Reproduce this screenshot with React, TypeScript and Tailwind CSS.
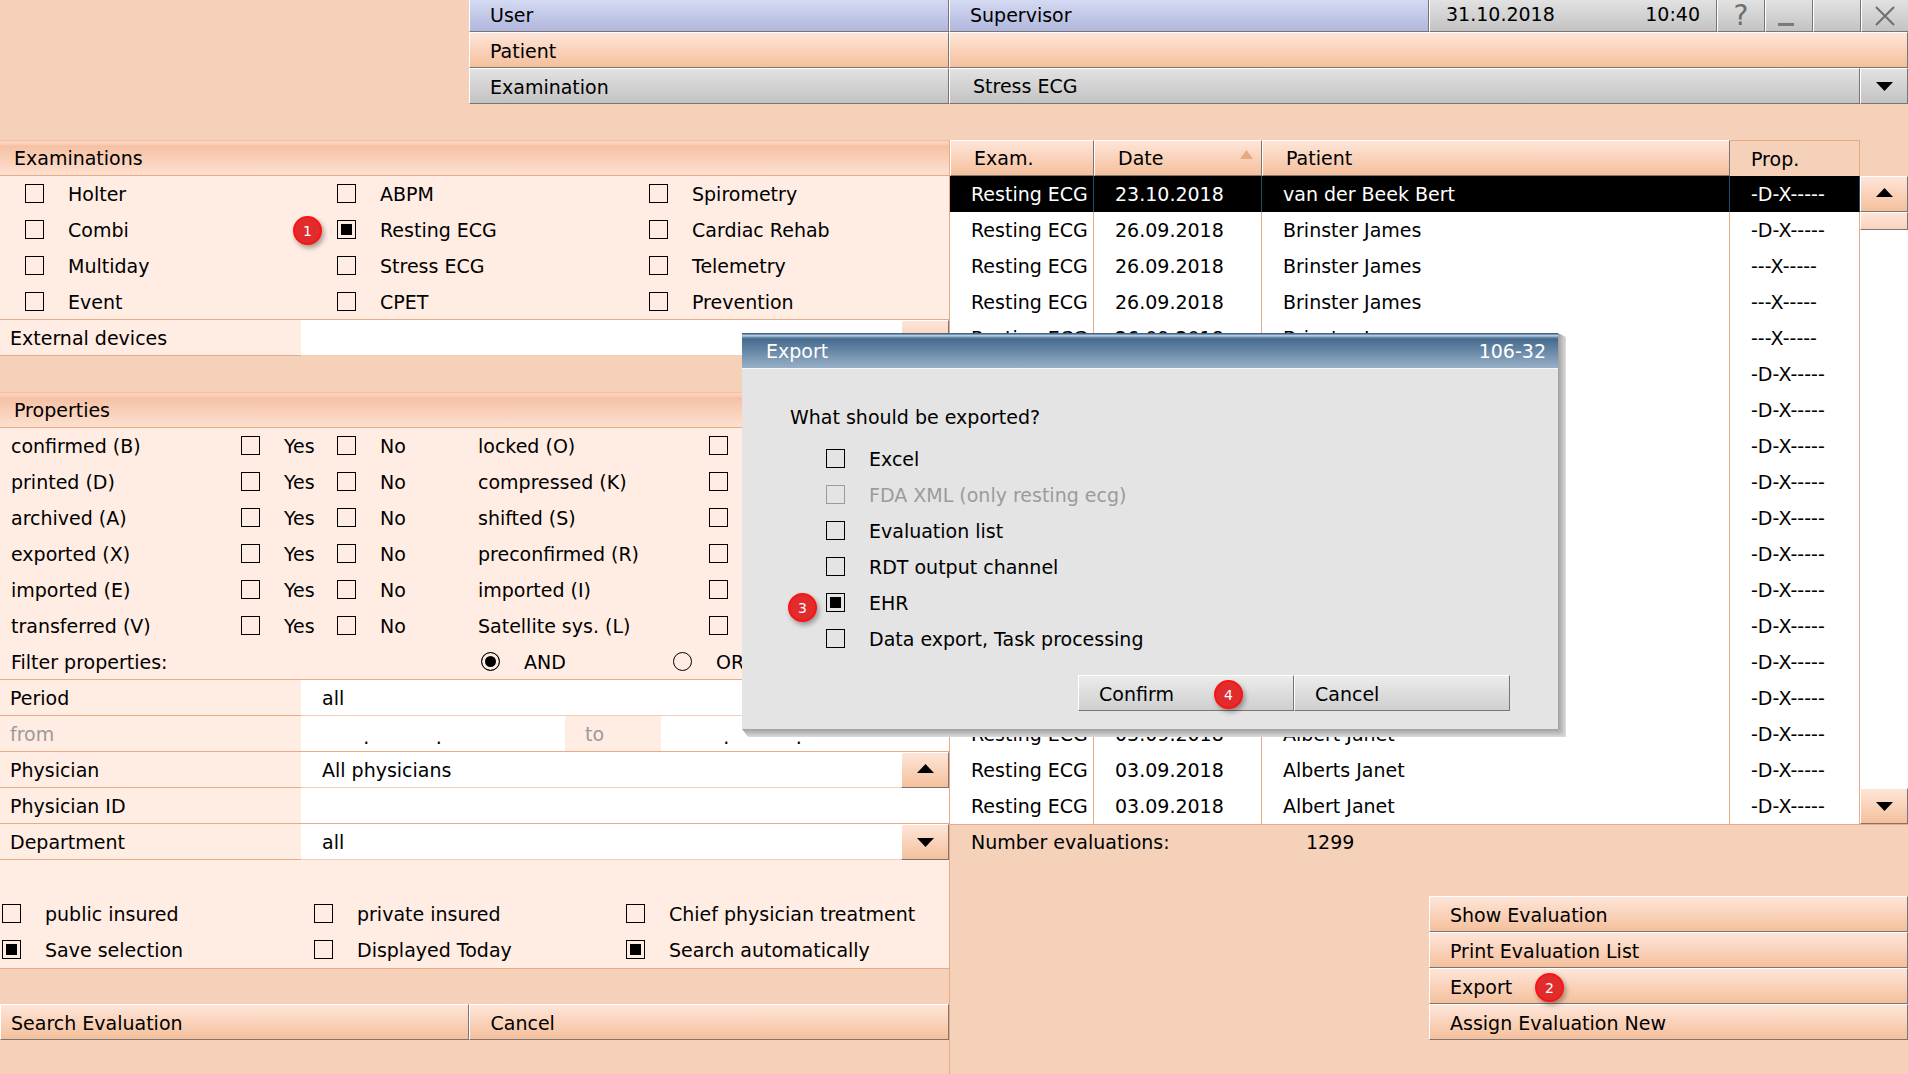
import { useState } from "react"
import type { ReactNode } from "react"
import clsx from "clsx"

const examinations = [
  "Holter", "ABPM", "Spirometry",
  "Combi", "Resting ECG", "Cardiac Rehab",
  "Multiday", "Stress ECG", "Telemetry",
  "Event", "CPET", "Prevention",
]

const properties = [
  ["confirmed (B)", "locked (O)"],
  ["printed (D)", "compressed (K)"],
  ["archived (A)", "shifted (S)"],
  ["exported (X)", "preconfirmed (R)"],
  ["imported (E)", "imported (I)"],
  ["transferred (V)", "Satellite sys. (L)"],
]

const options = [
  { name: "public insured" },
  { name: "private insured" },
  { name: "Chief physician treatment" },
  { name: "Save selection", checked: true },
  { name: "Displayed Today" },
  { name: "Search automatically", checked: true },
]

const exportTargets = [
  { name: "Excel" },
  { name: "FDA XML (only resting ecg)", disabled: true },
  { name: "Evaluation list" },
  { name: "RDT output channel" },
  { name: "EHR", checked: true },
  { name: "Data export, Task processing" },
]

const evaluations = [
  { date: "23.10.2018", patient: "van der Beek Bert", prop: "-D-X-----" },
  { date: "26.09.2018", patient: "Brinster James", prop: "-D-X-----" },
  { date: "26.09.2018", patient: "Brinster James", prop: "---X-----" },
  { date: "26.09.2018", patient: "Brinster James", prop: "---X-----" },
  { date: "26.09.2018", patient: "Brinster James", prop: "---X-----" },
  { date: "26.09.2018", patient: "Brinster James", prop: "-D-X-----" },
  { date: "26.09.2018", patient: "Brinster James", prop: "-D-X-----" },
  { date: "26.09.2018", patient: "Brinster James", prop: "-D-X-----" },
  { date: "26.09.2018", patient: "Brinster James", prop: "-D-X-----" },
  { date: "03.09.2018", patient: "Albert Janet", prop: "-D-X-----" },
  { date: "03.09.2018", patient: "Albert Janet", prop: "-D-X-----" },
  { date: "03.09.2018", patient: "Albert Janet", prop: "-D-X-----" },
  { date: "03.09.2018", patient: "Albert Janet", prop: "-D-X-----" },
  { date: "03.09.2018", patient: "Albert Janet", prop: "-D-X-----" },
  { date: "03.09.2018", patient: "Albert Janet", prop: "-D-X-----" },
  { date: "03.09.2018", patient: "Albert Janet", prop: "-D-X-----" },
  { date: "03.09.2018", patient: "Alberts Janet", prop: "-D-X-----" },
  { date: "03.09.2018", patient: "Albert Janet", prop: "-D-X-----" },
]

const raised = "border border-t-white border-l-white border-r-[#7b7472] border-b-[#7b7472]"
const peach = "bg-linear-to-b from-[#fee5d8] to-[#f4c09c]"
const silver = "bg-linear-to-b from-[#e2e2e2] to-[#c3c3c3]"
const lavender = "bg-linear-to-b from-[#d5daf3] to-[#b0b7dc]"
const paper = "bg-linear-to-b from-[#ececec] to-[#cfcfcf]"

function Arrow({ up }: { up?: boolean }) {
  return (
    <svg width="17" height="9" viewBox="0 0 17 9" className={clsx("fill-black", up && "mb-1")}>
      <path d={up ? "M8.5 0L17 9H0z" : "M0 0H17L8.5 9z"} />
    </svg>
  )
}

function Badge({ children, className }: { children: ReactNode; className: string }) {
  return (
    <span
      className={clsx(
        "absolute flex size-[29px] items-center justify-center rounded-full border-2 border-[#fb1414] bg-[#e02c2c] text-sm leading-none text-white shadow-[2px_3px_5px_rgba(0,0,0,0.35)]",
        className,
      )}
    >
      {children}
    </span>
  )
}

interface CheckProps {
  label: string
  checked?: boolean
  disabled?: boolean
  grey?: boolean
}

function Check({ label, checked, disabled, grey }: CheckProps) {
  return (
    <label className={clsx("flex h-9 items-center gap-6 whitespace-nowrap", disabled && "text-[#9b9b9b]")}>
      <input
        type="checkbox"
        defaultChecked={checked}
        disabled={disabled}
        className={clsx(
          "mb-0.5 size-[19px] shrink-0 appearance-none border border-black checked:bg-black disabled:border-[#9b9b9b]",
          grey ? "checked:shadow-[inset_0_0_0_3px_#e4e4e4]" : "checked:shadow-[inset_0_0_0_3px_#ffece2]",
        )}
      />
      {label}
    </label>
  )
}

function Radio({ label, checked }: { label: string; checked?: boolean }) {
  return (
    <label className="flex h-9 items-center gap-6">
      <input
        type="radio"
        name="filter"
        defaultChecked={checked}
        className="mb-0.5 size-[19px] shrink-0 appearance-none rounded-full border border-black checked:bg-black checked:shadow-[inset_0_0_0_3px_#ffece2]"
      />
      {label}
    </label>
  )
}

function SectionTitle({ children }: { children: ReactNode }) {
  return (
    <h2 className="h-9 border-t border-b border-t-[#f5bfa2] border-b-[#e8ab85] bg-[linear-gradient(to_bottom,#fbd3bd_0,#fbd3bd_2px,#f5c1a4_5px,#fde0d0_100%)] pl-3.5 leading-[34px]">
      {children}
    </h2>
  )
}

function SelectRow({ id, label, value, up }: { id: string; label: string; value: string; up?: boolean }) {
  return (
    <div className="flex h-9">
      <label htmlFor={id} className="w-[301px] border-b border-[#e8ab85] pl-2.5 leading-9">
        {label}
      </label>
      <select id={id} className="min-w-0 flex-1 appearance-none border-b border-[#f5cfb8] bg-white pt-0.5 pl-[21px]">
        <option>{value}</option>
      </select>
      <button aria-label={`Open ${label}`} className={clsx("flex w-12 items-center justify-center", raised, peach)}>
        <Arrow up={up} />
      </button>
    </div>
  )
}

function TopBar() {
  return (
    <header className="grid grid-cols-[469fr_480fr_959fr]">
      <div className={clsx("col-start-2 h-8 pl-5 leading-[31px]", raised, lavender, "border-t-0")}>User</div>
      <div className="flex h-8 leading-[31px]">
        <div className={clsx("flex-1 pl-5", raised, lavender, "border-t-0")}>Supervisor</div>
        <div className={clsx("flex w-72 justify-between px-4 leading-[29px]", raised, silver, "border-t-0")}>
          <span>31.10.2018</span>
          <span>10:40</span>
        </div>
        <button className={clsx("w-12 text-[28px] leading-7 text-[#6e6e6e]", raised, silver, "border-t-0")}>?</button>
        <button aria-label="Minimize" className={clsx("flex w-12 justify-center", raised, silver, "border-t-0")}>
          <svg width="24" height="30" className="stroke-[#7a7a7a]" strokeWidth="3">
            <path d="M1 24.5H17" />
          </svg>
        </button>
        <button aria-label="Maximize" className={clsx("w-12", raised, silver, "border-t-0")} />
        <button aria-label="Close" className={clsx("flex w-[47px] items-center justify-center", silver, "border-b border-l border-b-[#7b7472] border-l-white")}>
          <svg width="20" height="20" className="stroke-[#6e6e6e]" strokeWidth="2">
            <path d="M1 1L19 19M19 1L1 19" />
          </svg>
        </button>
      </div>

      <div className={clsx("col-start-2 h-9 pl-5 leading-9", raised, peach)}>Patient</div>
      <div className={clsx("h-9", raised, peach)} />

      <label htmlFor="examination" className={clsx("col-start-2 h-9 pl-5 leading-9", raised, silver)}>
        Examination
      </label>
      <div className="flex h-9">
        <select id="examination" className={clsx("min-w-0 flex-1 appearance-none pl-[23px]", raised, silver)}>
          <option>Stress ECG</option>
        </select>
        <button aria-label="Choose examination" className={clsx("flex w-12 items-center justify-center", raised, silver)}>
          <Arrow />
        </button>
      </div>
    </header>
  )
}

function SearchPanel() {
  return (
    <section className="border-r border-[#e8ab85]">
      <SectionTitle>Examinations</SectionTitle>
      <div className="relative grid grid-cols-[312px_312px_1fr] bg-[#ffece2] pl-[25px]">
        {examinations.map((name) => (
          <Check key={name} label={name} checked={name === "Resting ECG"} />
        ))}
        <Badge className="top-10 left-[293px]">1</Badge>
      </div>
      <div className="relative -mt-px border-t border-[#e8ab85] bg-[#ffece2]">
        <SelectRow id="devices" label="External devices" value="" />
      </div>

      <div className="mt-9 bg-[#ffece2]">
        <SectionTitle>Properties</SectionTitle>
        {properties.map(([first, second]) => (
          <div key={first} className="grid h-9 grid-cols-[230px_96px_141px_231px_96px_1fr] pl-[11px] leading-9 whitespace-nowrap">
            <span>{first}</span>
            <Check label="Yes" />
            <Check label="No" />
            <span>{second}</span>
            <Check label="Yes" />
            <Check label="No" />
          </div>
        ))}
        <div className="grid h-9 grid-cols-[470px_192px_1fr] border-b border-[#e8ab85] pl-[11px] leading-9">
          <span>Filter properties:</span>
          <Radio label="AND" checked />
          <Radio label="OR" />
        </div>

        <SelectRow id="period" label="Period" value="all" />
        <div className="flex h-9 border-b border-[#e8ab85] leading-9 text-[#9b9b9b]">
          <label htmlFor="from" className="w-[301px] pl-2.5">
            from
          </label>
          <input id="from" defaultValue="       .           ." className="w-[264px] bg-white pt-1.5 pl-5 text-black" />
          <label htmlFor="to" className="w-24 pl-5">
            to
          </label>
          <input id="to" defaultValue="       .           ." className="min-w-0 flex-1 bg-white pt-1.5 pl-5 text-black" />
        </div>
        <SelectRow id="physician" label="Physician" value="All physicians" up />
        <div className="flex h-9 border-b border-[#e8ab85] leading-9">
          <label htmlFor="physician-id" className="w-[301px] pl-2.5">
            Physician ID
          </label>
          <input id="physician-id" className="min-w-0 flex-1 bg-white pl-5" />
        </div>
        <SelectRow id="department" label="Department" value="all" />

        <div className="grid grid-cols-[312px_312px_1fr] border-b border-[#e8ab85] pt-9 pl-0.5">
          {options.map((option) => (
            <Check key={option.name} label={option.name} checked={option.checked} />
          ))}
        </div>
      </div>

      <div className="mt-[35px] grid grid-cols-[469fr_479fr]">
        <button className={clsx("h-9 pt-0.5 pl-2.5 text-left", raised, peach)}>Search Evaluation</button>
        <button className={clsx("h-9 pt-0.5 pl-5 text-left", raised, peach)}>Cancel</button>
      </div>
    </section>
  )
}

function EvaluationList() {
  const [selected, setSelected] = useState(0)
  const cell = "border-r p-0 pl-[21px] whitespace-nowrap"
  const head = "h-9 p-0 pl-[23px] text-left font-normal"

  return (
    <section>
      <div className="flex border-b border-[#e8ab85]">
        <table className="flex-1 table-fixed border-separate border-spacing-0">
          <colgroup>
            <col className="w-36" />
            <col className="w-[168px]" />
            <col />
            <col className="w-[130px]" />
          </colgroup>
          <thead>
            <tr>
              <th className={clsx(head, raised, peach)}>Exam.</th>
              <th className={clsx(head, raised, peach)}>
                <span className="flex items-center justify-between pr-2">
                  Date
                  <svg width="13" height="9" className="mb-2 fill-[#e3aa84]">
                    <path d="M6.5 0L13 9H0z" />
                  </svg>
                </span>
              </th>
              <th className={clsx(head, raised, peach)}>Patient</th>
              <th className="h-9 border-t border-r border-[#e8ab85] p-0 pt-0.5 pl-[21px] text-left font-normal">Prop.</th>
            </tr>
          </thead>
          <tbody>
            {evaluations.map((row, i) => (
              <tr
                key={i}
                onClick={() => setSelected(i)}
                className={clsx(
                  "h-9",
                  i === selected ? "bg-black text-white *:border-[#1d4d73]" : "bg-white *:border-[#e3ab87]",
                )}
              >
                <td className={cell}>Resting ECG</td>
                <td className={cell}>{row.date}</td>
                <td className={cell}>{row.patient}</td>
                <td className={cell}>{row.prop}</td>
              </tr>
            ))}
          </tbody>
        </table>
        {/* Scrollbar */}
        <div className="mt-9 flex w-12 flex-col bg-white">
          <button aria-label="Scroll up" className={clsx("flex h-9 items-center justify-center", raised, peach)}>
            <Arrow up />
          </button>
          <div className={clsx("h-[18px] bg-linear-to-b from-[#fee5d8] to-[#f9d3bd]", raised)} />
          <button aria-label="Scroll down" className={clsx("mt-auto flex h-9 items-center justify-center", raised, peach)}>
            <Arrow />
          </button>
        </div>
      </div>

      <div className="flex h-9 pl-[21px] leading-[34px]">
        <span className="w-[335px]">Number evaluations:</span>
        <span>1299</span>
      </div>

      <div className="mt-[35px] ml-auto flex w-1/2 flex-col *:h-9 *:pt-0.5 *:pl-5 *:text-left">
        <button className={clsx(raised, peach)}>Show Evaluation</button>
        <button className={clsx(raised, peach)}>Print Evaluation List</button>
        <button className={clsx("relative", raised, peach)}>
          Export
          <Badge className="top-1 left-[105px]">2</Badge>
        </button>
        <button className={clsx(raised, peach)}>Assign Evaluation New</button>
      </div>
    </section>
  )
}

function ExportDialog() {
  return (
    <div role="dialog" aria-labelledby="export-title" className="absolute top-[333px] left-[742px] w-[816px] bg-[#e4e4e4]">
      <div className="flex h-9 justify-between border-b border-[#f4f6f8] bg-[linear-gradient(to_bottom,#41678b_0,#41678b_1px,#a9bed4_2px,#c3d3e4_3px,#6f8fae_4px,#466b8f_6px,#98b0c7_100%)] pr-3 pl-6 leading-9 text-white">
        <h2 id="export-title">Export</h2>
        <span>106-32</span>
      </div>
      <div role="group" aria-labelledby="export-question" className="relative pt-[30px]">
        <p id="export-question" className="pb-1.5 pl-12 leading-9">
          What should be exported?
        </p>
        <div className="pl-[84px]">
          {exportTargets.map((target) => (
            <Check key={target.name} label={target.name} checked={target.checked} disabled={target.disabled} grey />
          ))}
        </div>
        <Badge className="top-[224px] left-[46px]">3</Badge>
      </div>
      <div className="mt-[18px] ml-[336px] grid w-[432px] grid-cols-2 pb-[18px]">
        <button className={clsx("relative h-9 pt-0.5 pl-5 text-left", raised, paper)}>
          Confirm
          <Badge className="top-1 left-[135px]">4</Badge>
        </button>
        <button className={clsx("h-9 pt-0.5 pl-5 text-left", raised, paper)}>Cancel</button>
      </div>
      {/* Shadow edges */}
      <div className="absolute top-0 -right-2 -bottom-2 w-2 bg-linear-to-r from-[#9f9f9f] to-[#dcdcdc] [clip-path:polygon(0_0,100%_4px,100%_100%,0_calc(100%-8px))]" />
      <div className="absolute -right-2 -bottom-2 left-0 h-2 bg-linear-to-b from-[#9f9f9f] to-[#dcdcdc] [clip-path:polygon(0_0,calc(100%-8px)_0,100%_100%,6px_100%)]" />
    </div>
  )
}

export default function App() {
  return (
    <div className="relative flex min-h-screen flex-col overflow-hidden bg-[#f5d1b9] font-['DejaVu_Sans',Verdana,sans-serif] text-[19px] text-black">
      <TopBar />
      <main className="mt-9 grid flex-1 grid-cols-[950fr_958fr]">
        <SearchPanel />
        <EvaluationList />
      </main>
      <ExportDialog />
    </div>
  )
}
